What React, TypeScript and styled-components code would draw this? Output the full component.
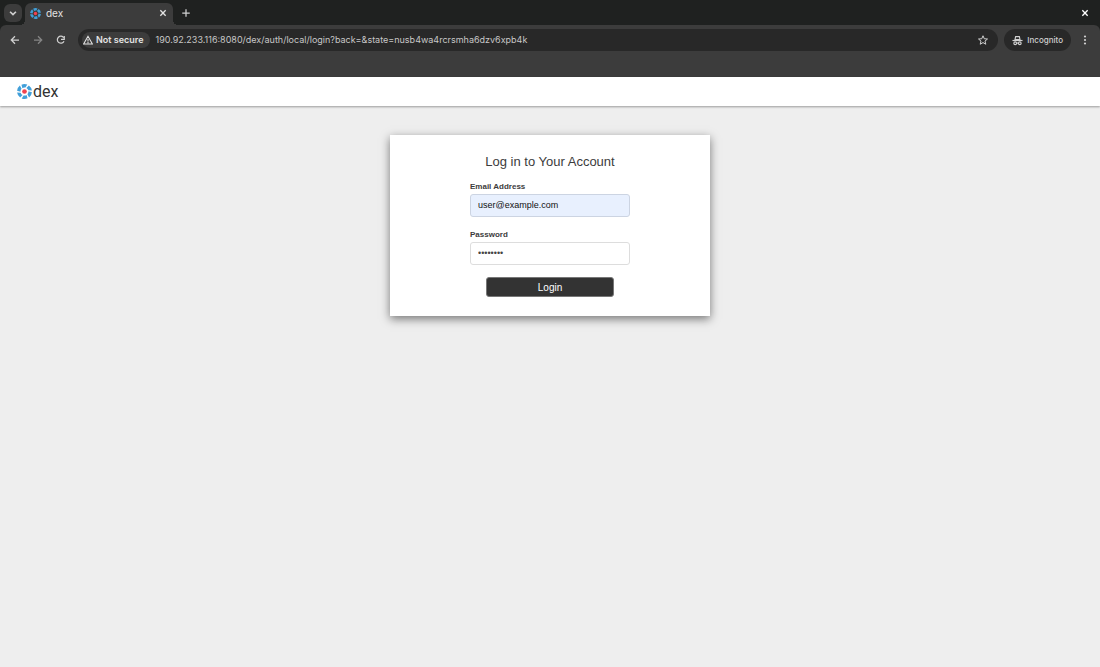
import React from "react";
import styled, { createGlobalStyle } from "styled-components";

const GlobalStyle = createGlobalStyle`
  *, *::before, *::after { box-sizing: border-box; }
  html, body, #root { height: 100%; }
  body { margin: 0; background: #eeeeee; }
  button, input { font: inherit; color: inherit; }
`;

const Window = styled.div`
  min-height: 100%;
  display: flex;
  flex-direction: column;
  font-family: Inter, "Liberation Sans", sans-serif;
`;

const TabStrip = styled.div`
  display: flex;
  align-items: center;
  height: 25px;
  padding: 0 8px 0 4px;
  background: #1f2120;
  color: #e3e3e3;
`;

const IconButton = styled.button<{ $size?: number; $tone?: string }>`
  display: flex;
  align-items: center;
  justify-content: center;
  flex: none;
  width: ${(p) => p.$size ?? 14}px;
  height: ${(p) => p.$size ?? 14}px;
  padding: 0;
  border: 0;
  background: none;
  color: ${(p) => p.$tone ?? "#d0d0d0"};
`;

const TabSearch = styled(IconButton)`
  border-radius: 6px;
  background: #3c3c3c;
`;

const Tab = styled.div`
  position: relative;
  display: flex;
  align-items: center;
  align-self: flex-end;
  gap: 5px;
  width: 148px;
  height: 22px;
  margin: 0 6px 0 3px;
  padding: 0 3px 2px 5px;
  border-radius: 6px 6px 0 0;
  background: #3c3c3c;
  font-size: 10px;
  line-height: 12px;

  &::before, &::after {
    content: "";
    position: absolute;
    bottom: 0;
    width: 5px;
    height: 5px;
  }
  &::before {
    left: -5px;
    background: radial-gradient(circle at 0 0, transparent 5px, #3c3c3c 5px);
  }
  &::after {
    right: -5px;
    background: radial-gradient(circle at 100% 0, transparent 5px, #3c3c3c 5px);
  }
`;

const TabTitle = styled.span`
  flex: 1;
`;

const Spacer = styled.div`
  flex: 1;
`;

const ToolbarBackdrop = styled.div`
  background: #1f2120;
`;

const Toolbar = styled.div`
  display: flex;
  align-items: flex-start;
  height: 52px;
  padding: 4px 8px 0;
  border-radius: 6px 6px 0 0;
  background: #3c3c3c;
`;

const NavButtons = styled.div`
  display: flex;
  align-items: center;
  gap: 9px;
  height: 22px;
  margin-right: 10px;
`;

const AddressBar = styled.div`
  display: flex;
  flex: 1;
  align-items: center;
  gap: 5px;
  height: 22px;
  padding: 0 8px 0 4px;
  border-radius: 11px;
  background: #282828;
`;

const SecurityChip = styled.button`
  display: flex;
  align-items: center;
  flex: none;
  gap: 3px;
  height: 16px;
  padding: 0 7px 0 1px;
  border: 0;
  border-radius: 8px;
  background: #3c3c3c;
  color: #e3e3e3;
  font-size: 9px;
  font-weight: 600;
  line-height: 12px;
  white-space: nowrap;
`;

const AddressInput = styled.input`
  flex: 1;
  min-width: 0;
  padding: 0;
  border: 0;
  outline: 0;
  background: none;
  color: #c7c7c7;
  font-size: 9px;
  line-height: 12px;
`;

const IncognitoChip = styled.button`
  display: flex;
  align-items: center;
  gap: 4px;
  height: 22px;
  margin: 0 7px 0 6px;
  padding: 0 8px;
  border: 0;
  border-radius: 11px;
  background: #282828;
  color: #d0d0d0;
  font-size: 8px;
  font-weight: 500;
  line-height: 12px;
`;

const MenuSlot = styled.div`
  display: flex;
  align-items: center;
  height: 22px;
`;

const Page = styled.div`
  flex: 1;
  background: #eeeeee;
  color: #3c3c3c;
  font-family: "Liberation Sans", Arial, sans-serif;
`;

const PageHeader = styled.header`
  display: flex;
  align-items: center;
  height: 29px;
  padding: 0 17px;
  background: #ffffff;
  box-shadow: 0 1px 2px rgba(0, 0, 0, 0.35);
`;

const Brand = styled.a`
  display: flex;
  align-items: center;
  gap: 1px;
  color: #333333;
  font-family: Roboto, "Open Sans", sans-serif;
  font-size: 16px;
  line-height: 20px;
  text-decoration: none;
`;

const Card = styled.main`
  width: 29%;
  min-width: 320px;
  margin: 29px auto 0;
  padding: 19px 20px;
  background: #ffffff;
  box-shadow: 0 3px 9px rgba(0, 0, 0, 0.5);
`;

const Heading = styled.h1`
  margin: 0 0 11px;
  font-size: 13px;
  font-weight: 400;
  line-height: 16px;
  text-align: center;
`;

const Form = styled.form`
  display: flex;
  flex-direction: column;
  align-items: center;
`;

const Field = styled.div`
  display: flex;
  flex-direction: column;
  gap: 1px;
  width: 160px;
  margin-bottom: 12px;
`;

const Label = styled.label`
  font-size: 8px;
  font-weight: 700;
  line-height: 12px;
`;

const TextInput = styled.input<{ $filled?: boolean }>`
  width: 100%;
  height: 23px;
  padding: 0 7px 1px;
  border: 1px solid ${(p) => (p.$filled ? "#ccd4e2" : "#dddddd")};
  border-radius: 3px;
  outline: 0;
  background: ${(p) => (p.$filled ? "#e8f0fe" : "#ffffff")};
  color: ${(p) => (p.$filled ? "#111111" : "#444444")};
  font-size: 9px;
`;

const LoginButton = styled.button`
  width: 128px;
  height: 20px;
  padding: 1px 0 0;
  border: 1px solid #777777;
  border-radius: 3px;
  background: #333333;
  color: #ffffff;
  font-size: 10px;
  line-height: 16px;
`;

const ARC_ANGLES = [0, 60, 120, 180, 240, 300];

function DexMark({ size }: { size: number }) {
  return (
    <svg width={size} height={size} viewBox="0 0 32 32" aria-hidden="true">
      {ARC_ANGLES.map((angle) => (
        <path
          key={angle}
          d="M9.500 1.500 A16 16 0 0 1 22 1.200 L18 7.700 A8.500 8.500 0 0 0 11.500 8.800 Z"
          fill="#419fd9"
          transform={`rotate(${angle} 16 16)`}
        />
      ))}
      <circle cx="16" cy="16" r="5" fill="#f0434f" />
    </svg>
  );
}

type GlyphProps = { size: number; width?: number; children: React.ReactNode };

function Glyph({ size, width = 2, children }: GlyphProps) {
  return (
    <svg
      width={size}
      height={size}
      viewBox="0 0 24 24"
      fill="none"
      stroke="currentColor"
      strokeWidth={width}
      aria-hidden="true"
    >
      {children}
    </svg>
  );
}

export default function App() {
  return (
    <Window>
      <GlobalStyle />
      <TabStrip>
        <TabSearch $size={18} aria-label="Search tabs">
          <Glyph size={10} width={4}>
            <path d="M5 9l7 7 7-7" />
          </Glyph>
        </TabSearch>
        <Tab>
          <DexMark size={11} />
          <TabTitle>dex</TabTitle>
          <IconButton aria-label="Close tab" $tone="#e3e3e3">
            <Glyph size={8} width={4}>
              <path d="M4 4l16 16M20 4L4 20" />
            </Glyph>
          </IconButton>
        </Tab>
        <IconButton aria-label="New tab">
          <Glyph size={10} width={3}>
            <path d="M12 3v18M3 12h18" />
          </Glyph>
        </IconButton>
        <Spacer />
        <IconButton aria-label="Close window" $tone="#ffffff">
          <Glyph size={8} width={4}>
            <path d="M4 4l16 16M20 4L4 20" />
          </Glyph>
        </IconButton>
      </TabStrip>

      <ToolbarBackdrop>
        <Toolbar>
          <NavButtons>
            <IconButton aria-label="Back">
              <Glyph size={12} width={2.5}>
                <path d="M20 12H5M12 4.500L4.500 12l7.500 7.500" />
              </Glyph>
            </IconButton>
            <IconButton aria-label="Forward" $tone="#858585">
              <Glyph size={12} width={2.5}>
                <path d="M4 12h15M12 4.500l7.500 7.500-7.500 7.500" />
              </Glyph>
            </IconButton>
            <IconButton aria-label="Reload">
              <Glyph size={12} width={2.5}>
                <path d="M17.500 7.500A7 7 0 1 0 18 14.500" />
                <path d="M18.500 4v6.500h-6.500" />
              </Glyph>
            </IconButton>
          </NavButtons>
          <AddressBar>
            <SecurityChip>
              <Glyph size={10} width={2.5}>
                <path d="M12 3L1.500 21.500h21zM12 9.500v6M12 17v2.500" />
              </Glyph>
              Not secure
            </SecurityChip>
            <AddressInput
              aria-label="Address"
              defaultValue="190.92.233.116:8080/dex/auth/local/login?back=&state=nusb4wa4rcrsmha6dzv6xpb4k"
            />
            <IconButton aria-label="Bookmark this page">
              <Glyph size={12} width={2}>
                <path d="M12 3.500l2.500 6 6.500.5-5 4.200 1.600 6.300L12 17.100l-5.600 3.400 1.600-6.300-5-4.200 6.500-.5z" />
              </Glyph>
            </IconButton>
          </AddressBar>
          <IncognitoChip>
            <Glyph size={11} width={2.5}>
              <path d="M6.500 10L8 3.500h8L17.500 10z" />
              <path d="M1 12h22" />
              <circle cx="7" cy="18" r="3" />
              <circle cx="17" cy="18" r="3" />
              <path d="M10 17.500h4" />
            </Glyph>
            Incognito
          </IncognitoChip>
          <MenuSlot>
            <IconButton aria-label="Menu">
              <Glyph size={12} width={0}>
                <g fill="currentColor">
                  <circle cx="12" cy="5" r="2.200" />
                  <circle cx="12" cy="12" r="2.200" />
                  <circle cx="12" cy="19" r="2.200" />
                </g>
              </Glyph>
            </IconButton>
          </MenuSlot>
        </Toolbar>
      </ToolbarBackdrop>

      <Page>
        <PageHeader>
          <Brand href="#">
            <DexMark size={15} />
            dex
          </Brand>
        </PageHeader>
        <Card>
          <Heading>Log in to Your Account</Heading>
          <Form onSubmit={(event) => event.preventDefault()}>
            <Field>
              <Label htmlFor="login">Email Address</Label>
              <TextInput id="login" type="text" defaultValue="user@example.com" $filled />
            </Field>
            <Field>
              <Label htmlFor="password">Password</Label>
              <TextInput id="password" type="password" defaultValue="password" />
            </Field>
            <LoginButton type="submit">Login</LoginButton>
          </Form>
        </Card>
      </Page>
    </Window>
  );
}
